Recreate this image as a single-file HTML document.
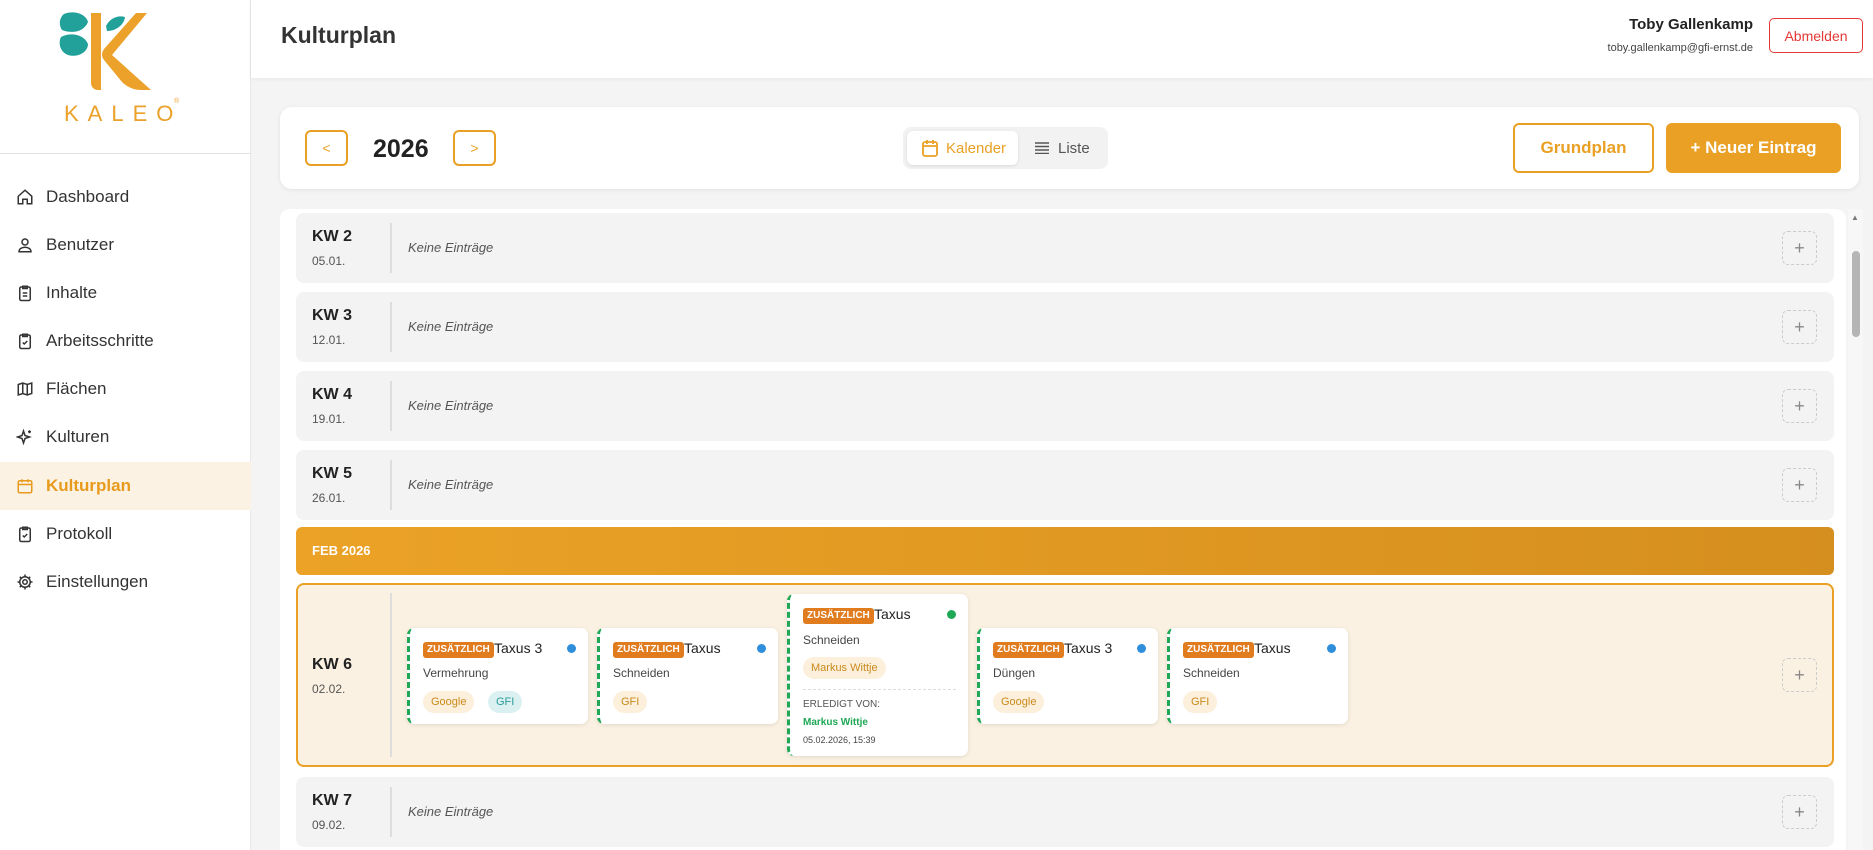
<!DOCTYPE html>
<html><head><meta charset="utf-8"><style>
*{box-sizing:border-box;margin:0;padding:0}
body{width:1873px;height:850px;overflow:hidden;background:#f4f4f4;font-family:"Liberation Sans",sans-serif;color:#222;position:relative}
.sb{position:absolute;left:0;top:0;width:251px;height:850px;background:#fff;border-right:1px solid #e8e8e8}
.sb .sep{position:absolute;left:0;top:153px;width:251px;border-top:1px solid #e2e2e2}
.nav{position:absolute;left:0;width:251px;height:48px;display:flex;align-items:center;font-size:17px;color:#333}
.nav svg{position:absolute;left:16px;width:18px;height:18px}
.nav span{position:absolute;left:46px}
.nav.act{background:#fcf2e4;color:#e89a1c;font-weight:bold}
.hdr{position:absolute;left:251px;top:0;width:1622px;height:78px;background:#fff;box-shadow:0 1px 4px rgba(0,0,0,.06)}
.abs{position:absolute}
.btn{position:absolute;border:2px solid #e9a024;border-radius:6px;color:#e9a024;display:flex;align-items:center;justify-content:center;background:#fff}
.row{position:absolute;left:296px;width:1538px;height:70px;background:#f3f3f3;border-radius:8px}
.kw{position:absolute;left:16px;top:15px;font-weight:bold;font-size:16px;color:#222}
.dt{position:absolute;left:16px;top:41px;font-size:12px;color:#555}
.dv{position:absolute;left:94px;top:10px;height:50px;border-left:2px solid #ddd}
.ke{position:absolute;left:112px;top:27px;font-size:13px;font-style:italic;color:#555}
.pl{position:absolute;right:17px;top:18px;width:35px;height:34px;border:1.5px dashed #ccc;border-radius:6px;color:#888;font-size:18px;display:flex;align-items:center;justify-content:center}
.card{position:absolute;width:181px;background:#fff;border-radius:7px;border-left:3px dashed #1fa855;box-shadow:0 1px 4px rgba(0,0,0,.1)}
.bd{position:absolute;left:13px;height:16px;background:#e07b1e;color:#fff;font-size:10px;font-weight:bold;padding:0 4px;line-height:16px;border-radius:3px}
.tt{position:absolute;font-size:14px;color:#222}
.dot{position:absolute;right:12px;width:9px;height:9px;border-radius:50%;background:#2f8fdd}
.sub{position:absolute;left:13px;font-size:12px;color:#444}
.tag{position:absolute;height:22px;border-radius:11px;font-size:11px;padding:0 8px;line-height:22px;background:#fcefdb;color:#c98a1c}
.tag.g{background:#dbf1f1;color:#2a9a9a}
</style></head><body>
<div class="sb">
<svg class="abs" style="left:0;top:0" width="251" height="100" viewBox="0 0 251 100">
<path d="M64 14 C74 10 86 14 88 22 C84 32 72 34 62 30 C58 24 60 17 64 14z" fill="#22a19a"/>
<path d="M61 37 C70 32 84 34 88 44 C88 52 78 58 68 55 C60 52 58 43 61 37z" fill="#22a19a"/>
<path d="M106 26 C110 18 118 15 125 17 C124 25 116 31 107 31z" fill="#22a19a"/>
<path d="M91 13 h10 v77 h-3 a7 7 0 0 1 -7 -7z" fill="#eba12a"/>
<path d="M136 13 h11 L112 55 L151 90 h-10 Q130 90 122 82 L104 60 Q100 55 104 49z" fill="#eba12a"/>
</svg>
<div class="abs" style="left:64px;top:101px;font-size:22px;letter-spacing:9px;color:#eba12a">KALEO</div>
<div class="abs" style="left:174px;top:98px;font-size:7px;color:#eba12a">®</div>
<div class="sep"></div>
<div class="nav" style="top:173px"><svg viewBox="0 0 24 24" fill="none" stroke="#333" stroke-width="2"><path d="M3 11l9-8 9 8v10h-6v-6H9v6H3z"/></svg><span>Dashboard</span></div>
<div class="nav" style="top:221px"><svg viewBox="0 0 24 24" fill="none" stroke="#333" stroke-width="2"><circle cx="12" cy="8" r="4"/><path d="M4 21c0-4 4-6 8-6s8 2 8 6z"/></svg><span>Benutzer</span></div>
<div class="nav" style="top:269px"><svg viewBox="0 0 24 24" fill="none" stroke="#333" stroke-width="2"><rect x="5" y="4" width="14" height="18" rx="2"/><path d="M9 3h6v3H9zM9 12h6M9 16h6"/></svg><span>Inhalte</span></div>
<div class="nav" style="top:317px"><svg viewBox="0 0 24 24" fill="none" stroke="#333" stroke-width="2"><rect x="5" y="4" width="14" height="18" rx="2"/><path d="M9 3h6v3H9zM9 14l2 2 4-4"/></svg><span>Arbeitsschritte</span></div>
<div class="nav" style="top:365px"><svg viewBox="0 0 24 24" fill="none" stroke="#333" stroke-width="2"><path d="M3 6l6-2 6 2 6-2v14l-6 2-6-2-6 2zM9 4v14M15 6v14"/></svg><span>Flächen</span></div>
<div class="nav" style="top:413px"><svg viewBox="0 0 24 24" fill="none" stroke="#333" stroke-width="2"><path d="M10 4l2 6 6 2-6 2-2 6-2-6-6-2 6-2zM18 3v4M16 5h4"/></svg><span>Kulturen</span></div>
<div class="nav act" style="top:462px"><svg viewBox="0 0 24 24" fill="none" stroke="#e89a1c" stroke-width="2"><rect x="3" y="5" width="18" height="16" rx="2"/><path d="M3 10h18M8 3v4M16 3v4"/></svg><span>Kulturplan</span></div>
<div class="nav" style="top:510px"><svg viewBox="0 0 24 24" fill="none" stroke="#333" stroke-width="2"><rect x="5" y="4" width="14" height="18" rx="2"/><path d="M9 3h6v3H9zM9 14l2 2 4-4"/></svg><span>Protokoll</span></div>
<div class="nav" style="top:558px"><svg viewBox="0 0 24 24" fill="none" stroke="#333" stroke-width="2"><circle cx="12" cy="12" r="3"/><path d="M12 2v3M12 19v3M2 12h3M19 12h3M5 5l2 2M17 17l2 2M5 19l2-2M17 7l2-2"/><circle cx="12" cy="12" r="7"/></svg><span>Einstellungen</span></div>
</div>
<div class="hdr">
<div class="abs" style="left:30px;top:22px;font-size:23px;font-weight:bold;color:#333">Kulturplan</div>
<div class="abs" style="right:120px;top:16px;font-size:15px;font-weight:bold;color:#222">Toby Gallenkamp</div>
<div class="abs" style="right:120px;top:42px;font-size:11px;color:#444">toby.gallenkamp@gfi-ernst.de</div>
<div class="abs" style="left:1518px;top:18px;width:94px;height:35px;border:1.5px solid #e53935;border-radius:5px;color:#e53935;font-size:14px;display:flex;align-items:center;justify-content:center">Abmelden</div>
</div>
<div class="abs" style="left:280px;top:107px;width:1579px;height:82px;background:#fff;border-radius:12px;box-shadow:0 1px 5px rgba(0,0,0,.08)"></div>
<div class="btn" style="left:305px;top:130px;width:43px;height:36px;font-size:14px">&lt;</div>
<div class="abs" style="left:373px;top:135px;font-size:25px;font-weight:bold;color:#222">2026</div>
<div class="btn" style="left:453px;top:130px;width:43px;height:36px;font-size:14px">&gt;</div>
<div class="abs" style="left:903px;top:127px;width:205px;height:42px;background:#f2f2f2;border-radius:8px"></div>
<div class="abs" style="left:907px;top:131px;width:111px;height:34px;background:#fff;border-radius:6px;box-shadow:0 1px 3px rgba(0,0,0,.1)"></div>
<svg class="abs" style="left:922px;top:139px" width="16" height="18" viewBox="0 0 16 18" fill="none" stroke="#e9a024" stroke-width="1.8"><rect x="1" y="3" width="14" height="14" rx="2"/><path d="M1 7h14M5 1v4M11 1v4"/></svg>
<div class="abs" style="left:946px;top:140px;font-size:15px;color:#e9a024">Kalender</div>
<svg class="abs" style="left:1035px;top:142px" width="14" height="12" viewBox="0 0 14 12" stroke="#555" stroke-width="1.6"><path d="M0 1h14M0 4.5h14M0 8h14M0 11.5h14"/></svg>
<div class="abs" style="left:1058px;top:140px;font-size:15px;color:#555">Liste</div>
<div class="btn" style="left:1513px;top:123px;width:141px;height:50px;font-size:17px;font-weight:bold">Grundplan</div>
<div class="abs" style="left:1666px;top:123px;width:175px;height:50px;background:#e9a024;border-radius:6px;color:#fff;font-size:17px;font-weight:bold;display:flex;align-items:center;justify-content:center">+ Neuer Eintrag</div>
<div class="abs" style="left:280px;top:209px;width:1566px;height:641px;background:#fff;border-radius:10px 10px 0 0"></div>
<div class="abs" style="left:1848px;top:209px;width:15px;height:641px;background:#f7f7f7"></div>
<div class="abs" style="left:1851px;top:213px;font-size:8px;color:#777">▲</div>
<div class="abs" style="left:1852px;top:251px;width:8px;height:86px;background:#b5b5b5;border-radius:4px"></div>

<div class="row" style="top:213px"><div class="kw">KW 2</div><div class="dt">05.01.</div><div class="dv"></div><div class="ke">Keine Einträge</div><div class="pl">+</div></div>
<div class="row" style="top:292px"><div class="kw">KW 3</div><div class="dt">12.01.</div><div class="dv"></div><div class="ke">Keine Einträge</div><div class="pl">+</div></div>
<div class="row" style="top:371px"><div class="kw">KW 4</div><div class="dt">19.01.</div><div class="dv"></div><div class="ke">Keine Einträge</div><div class="pl">+</div></div>
<div class="row" style="top:450px"><div class="kw">KW 5</div><div class="dt">26.01.</div><div class="dv"></div><div class="ke">Keine Einträge</div><div class="pl">+</div></div>
<div class="abs" style="left:296px;top:527px;width:1538px;height:48px;border-radius:6px;background:linear-gradient(90deg,#eba226,#d58f1e);color:#fff;font-size:13px;font-weight:bold;padding:16px 0 0 16px">FEB 2026</div>
<div class="row" style="top:583px;height:184px;background:#fbf1e2;border:2px solid #e9a024">
<div class="kw" style="top:71px;left:14px">KW 6</div><div class="dt" style="top:97px;left:14px">02.02.</div><div class="dv" style="top:8px;height:164px;left:92px"></div><div class="pl" style="top:73px;right:15px">+</div></div>

<div class="card" style="left:407px;top:628px;height:96px"><div class="bd" style="top:14px">ZUSÄTZLICH</div><div class="tt" style="left:84px;top:12px">Taxus 3</div><div class="dot" style="top:16px"></div><div class="sub" style="top:38px">Vermehrung</div><div class="tag" style="left:13px;top:63px">Google</div><div class="tag g" style="left:78px;top:63px">GFI</div></div>
<div class="card" style="left:597px;top:628px;height:96px"><div class="bd" style="top:14px">ZUSÄTZLICH</div><div class="tt" style="left:84px;top:12px">Taxus</div><div class="dot" style="top:16px"></div><div class="sub" style="top:38px">Schneiden</div><div class="tag" style="left:13px;top:63px">GFI</div></div>
<div class="card" style="left:787px;top:594px;height:162px"><div class="bd" style="top:14px">ZUSÄTZLICH</div><div class="tt" style="left:84px;top:12px">Taxus</div><div class="dot" style="top:16px;background:#1fa855"></div><div class="sub" style="top:39px">Schneiden</div><div class="tag" style="left:13px;top:63px">Markus Wittje</div><div class="abs" style="left:13px;right:12px;top:95px;border-top:1px dashed #ddd"></div><div class="abs" style="left:13px;top:105px;font-size:10px;color:#555">ERLEDIGT VON:</div><div class="abs" style="left:13px;top:123px;font-size:10px;font-weight:bold;color:#1fa855">Markus Wittje</div><div class="abs" style="left:13px;top:141px;font-size:9px;color:#444">05.02.2026, 15:39</div></div>
<div class="card" style="left:977px;top:628px;height:96px"><div class="bd" style="top:14px">ZUSÄTZLICH</div><div class="tt" style="left:84px;top:12px">Taxus 3</div><div class="dot" style="top:16px"></div><div class="sub" style="top:38px">Düngen</div><div class="tag" style="left:13px;top:63px">Google</div></div>
<div class="card" style="left:1167px;top:628px;height:96px"><div class="bd" style="top:14px">ZUSÄTZLICH</div><div class="tt" style="left:84px;top:12px">Taxus</div><div class="dot" style="top:16px"></div><div class="sub" style="top:38px">Schneiden</div><div class="tag" style="left:13px;top:63px">GFI</div></div>

<div class="row" style="top:777px"><div class="kw">KW 7</div><div class="dt">09.02.</div><div class="dv"></div><div class="ke">Keine Einträge</div><div class="pl">+</div></div>
</body></html>
